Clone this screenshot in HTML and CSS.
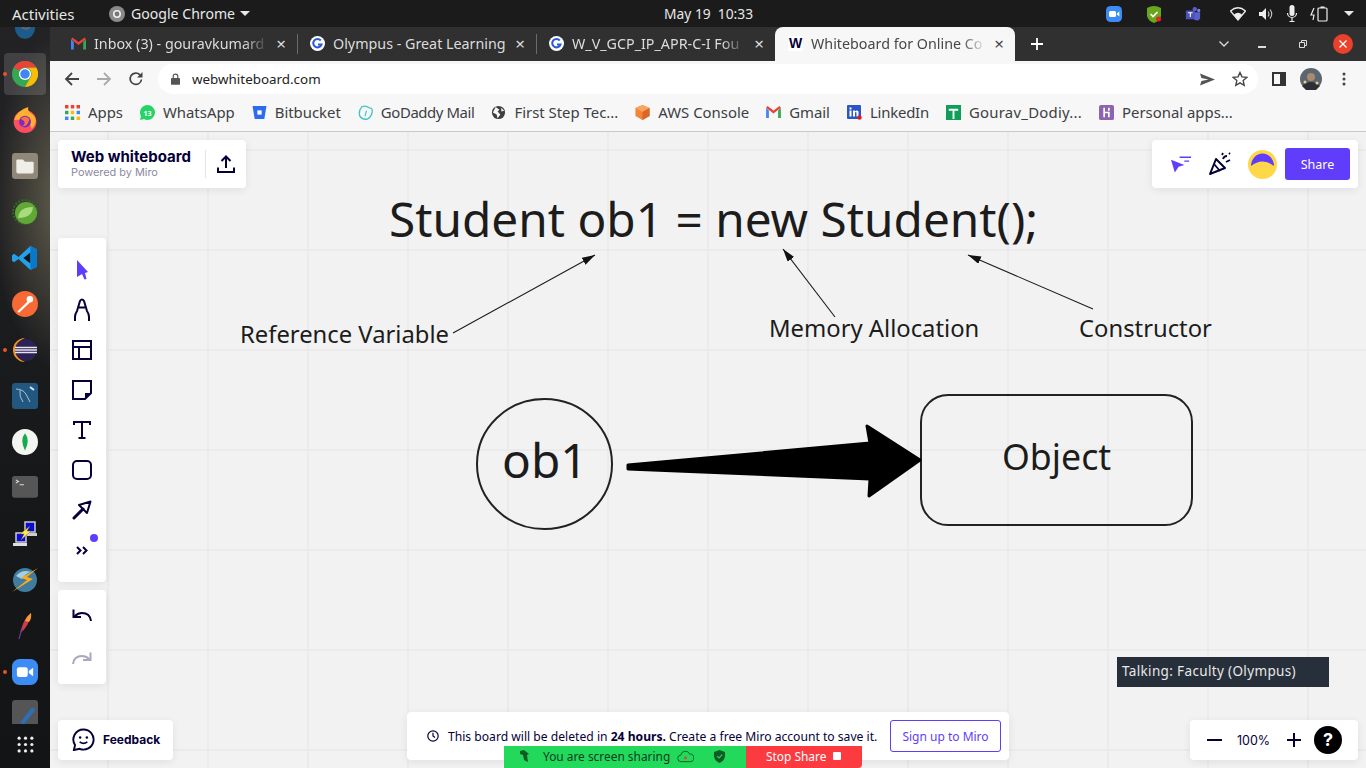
FILE: index.html
```html
<!DOCTYPE html>
<html lang="en">
<head>
    <meta charset="UTF-8">
    <title>Whiteboard for Online Collaboration</title>
    <link rel="stylesheet" href="styles.css">
</head>
<body>
<div class="topbar">
    <span class="activities">Activities</span>
    <svg class="app-icon" viewBox="0 0 16 16"><circle cx="8" cy="8" r="8" fill="#8a8a8a"/><circle cx="8" cy="8" r="4" fill="#eee"/><circle cx="8" cy="8" r="2.4" fill="#777"/></svg>
    <span class="app-name">Google Chrome</span>
    <span class="caret"></span>
    <span class="clock">May 19&nbsp;&nbsp;10:33</span>
    <div class="tray">
        <svg class="tray-icon t-zoom" viewBox="0 0 16 16"><rect width="16" height="16" rx="4.5" fill="#3d8cf5"/><rect x="3" y="5" width="7" height="6" rx="1.5" fill="#fff"/><path d="M10.8 7.4 13.3 5.5v5l-2.5-1.9z" fill="#fff"/></svg>
        <svg class="tray-icon t-green" viewBox="0 0 16 18"><path d="M1 3q7-4 14 0v8q-1 5-7 7-6-2-7-7z" fill="#6aa51e"/><path d="M4.500 9l2.500 2.500 4.500-4.500" fill="none" stroke="#fff" stroke-width="1.600"/><circle cx="12.500" cy="14" r="2.500" fill="#e3262a"/></svg>
        <svg class="tray-icon t-teams" viewBox="0 0 18 18"><circle cx="11" cy="3.500" r="2.500" fill="#5b5fc7"/><circle cx="15.500" cy="5" r="1.800" fill="#7b83eb"/><path d="M9 7h8v6a3 3 0 0 1-4 3 4 4 0 0 1-4-3z" fill="#5b5fc7"/><rect x="1" y="5" width="10" height="10" rx="1" fill="#4b53bc"/><path d="M3.500 7.500h5M6 7.500v5" stroke="#fff" stroke-width="1.200"/></svg>
        <svg class="tray-icon t-wifi" viewBox="0 0 16 14"><path d="M0.500 4Q8-2.500 15.500 4L8 13z" fill="none" stroke="#eee" stroke-width="1.300"/><path d="M4 7.500Q8 4 12 7.500L8 13z" fill="#eee"/></svg>
        <svg class="tray-icon t-vol" viewBox="0 0 16 14"><path d="M1 5h3l4-4v12l-4-4H1z" fill="#eee"/><path d="M10 4.500q2 2.500 0 5M12 2.500q3.500 4.500 0 9" fill="none" stroke="#ccc" stroke-width="1.100"/></svg>
        <svg class="tray-icon t-mic" viewBox="0 0 12 18"><rect x="3.500" y="0" width="5" height="11" rx="2.500" fill="#eee"/><path d="M1.500 8a4.500 4.500 0 0 0 9 0M6 12.500V16M3.500 16.500h5" fill="none" stroke="#eee" stroke-width="1.200"/></svg>
        <svg class="tray-icon t-batt" viewBox="0 0 20 16"><path d="M4 2 1 9h3l-1 5" fill="none" stroke="#eee" stroke-width="1.200"/><rect x="8" y="2" width="9" height="13" rx="1" fill="none" stroke="#eee" stroke-width="1.200"/><rect x="10.500" y="0.500" width="4" height="1.500" fill="#eee"/></svg>
        <span class="caret"></span>
    </div>
</div>

<div class="desktop">
    <nav class="dock">
        <div class="dock-slot dock-cut"><svg class="dock-icon" viewBox="0 0 24 28"><path d="M1 0h22v16a11 12 0 0 1-22 0z" fill="#1d5c8a"/><path d="M8 14q4 5 8 2 1-3-3-4" fill="none" stroke="#5b6670" stroke-width="2.500"/></svg></div>
        <div class="dock-slot dock-active"><i class="run-dot"></i>
            <svg class="dock-icon" viewBox="0 0 24 24"><circle cx="12" cy="12" r="12" fill="#34a853"/><path d="M22.400 6H12a6 6 0 0 1 5.200 9L12 24a12 12 0 0 0 10.400-18z" fill="#fbbc05"/><path d="M1.600 6A12 12 0 0 1 22.400 6H12a6 6 0 0 0-5.200 3z" fill="#ea4335"/><circle cx="12" cy="12" r="5.600" fill="#fff"/><circle cx="12" cy="12" r="4.400" fill="#4285f4"/></svg></div>
        <div class="dock-slot"><svg class="dock-icon" viewBox="0 0 24 24"><circle cx="12" cy="13.500" r="10.500" fill="#ff4f5e"/><path d="M2 12Q5 3 15 0q-1 4 3 6 4 3 4 7-1 5-4 7-2-10-16-8z" fill="#ffb02e"/><circle cx="12" cy="13.500" r="5.500" fill="#7a2cc4"/><path d="M8 11q4-4 8 0-1 7-7 7 5-3 1-6z" fill="#ff7139"/></svg></div>
        <div class="dock-slot"><svg class="dock-icon" viewBox="0 0 24 24"><rect width="24" height="24" rx="3" fill="#8f8778"/><path d="M4 7a1 1 0 0 1 1-1h5l2 2h7a1 1 0 0 1 1 1v8a2 2 0 0 1-2 2H6a2 2 0 0 1-2-2z" fill="#f0eee9"/></svg></div>
        <div class="dock-slot"><svg class="dock-icon" viewBox="0 0 26 26"><circle cx="13" cy="13" r="12" fill="none" stroke="#2f6b22" stroke-dasharray="2 1.500" stroke-width="2"/><circle cx="14" cy="14" r="11" fill="#62a838"/><path d="M6 19q1-11 15-11-1 11-15 11z" fill="#a6dc7c"/></svg></div>
        <div class="dock-slot"><svg class="dock-icon" viewBox="0 0 24 24"><path d="M17 1 23 4v16l-6 3L6 13l-4 3-2-1.500V9.500L2 8l4 3z" fill="#23a0ea"/><path d="M17 7 10.500 12 17 17z" fill="#15161a"/><path d="M17 1 23 4v16l-6 3z" fill="#0a78c8"/></svg></div>
        <div class="dock-slot"><svg class="dock-icon" viewBox="0 0 24 24"><circle cx="12" cy="12" r="12" fill="#f76935"/><path d="M5 19 15 9l1.500 1.500L6.500 20z" fill="#fff"/><circle cx="16.500" cy="7.500" r="3" fill="#fff"/></svg></div>
        <div class="dock-slot"><i class="run-dot"></i><svg class="dock-icon" viewBox="0 0 26 24"><path d="M13 0a12 12 0 0 0 0 24 13 13 0 0 1 0-24z" fill="#f7941e"/><circle cx="14" cy="12" r="11" fill="#2c2255"/><path d="M3 9.500h22M3 12h22M3 14.500h22" stroke="#e8e4f2" stroke-width="1.300"/></svg></div>
        <div class="dock-slot"><svg class="dock-icon" viewBox="0 0 26 26"><rect width="26" height="26" rx="3" fill="#22577f"/><path d="M4 6q8 0 11 7l3 6M8 7q-1 7 3 12" fill="none" stroke="#b9cfdd" stroke-width="0.900"/><path d="M18 4l4 3" stroke="#dce6ee" stroke-width="2"/></svg></div>
        <div class="dock-slot"><svg class="dock-icon" viewBox="0 0 24 24"><circle cx="12" cy="12" r="12" fill="#f4f4f0"/><path d="M12 4q5 6 0 16-5-10 0-16z" fill="#13aa52"/></svg></div>
        <div class="dock-slot"><svg class="dock-icon" viewBox="0 0 24 22"><rect width="24" height="20" rx="2.500" fill="#565656"/><path d="M3.500 3.500 6 5 3.500 6.500M7 8h4" fill="none" stroke="#ddd" stroke-width="1"/></svg></div>
        <div class="dock-slot"><svg class="dock-icon" viewBox="0 0 26 26"><rect x="13" y="1" width="10" height="10" fill="#0a0ad0" stroke="#ccc" stroke-width="1.500"/><rect x="4" y="12" width="10" height="9" fill="#0a0ad0" stroke="#ccc" stroke-width="1.500"/><rect x="15" y="12" width="10" height="3" fill="#ccc"/><rect x="1" y="22" width="14" height="3" fill="#ddd"/><path d="M18 5 8 13h4l-3 6 10-9h-4z" fill="#ffe94a" stroke="#555" stroke-width="0.400"/></svg></div>
        <div class="dock-slot"><svg class="dock-icon" viewBox="0 0 26 26"><circle cx="13" cy="13" r="12" fill="#3f7c9e"/><path d="M4 9q6-7 15-4-5 1-9 7z" fill="#a3cfe2"/><path d="M26 1 9 11l6 2L0 25 21 12l-6-2z" fill="#fbaa19"/></svg></div>
        <div class="dock-slot"><svg class="dock-icon" viewBox="0 0 26 26"><path d="M19 0q-7 5-10 17l-1 3q9-6 11-20z" fill="#d23a4a"/><path d="M10 15 7 26" stroke="#6c3d8f" stroke-width="1.200"/><path d="M19 0q-4 3-6 8l4 1q3-4 2-9z" fill="#f49a3a"/></svg></div>
        <div class="dock-slot"><i class="run-dot"></i><svg class="dock-icon" viewBox="0 0 24 24"><rect width="24" height="24" rx="7" fill="#3d8cf5"/><rect x="4.500" y="7.500" width="10" height="9" rx="2" fill="#fff"/><path d="M15.500 11 19.500 8v8l-4-3z" fill="#fff"/></svg></div>
        <div class="dock-slot dock-last"><svg class="dock-icon" viewBox="0 0 24 24"><rect width="24" height="24" rx="3" fill="#555"/><path d="M9 22 20 8" stroke="#2f6db5" stroke-width="4"/></svg></div>
        <svg class="dock-grid" viewBox="0 0 16 16" fill="#eee"><circle cx="2" cy="2" r="1.500"/><circle cx="8" cy="2" r="1.500"/><circle cx="14" cy="2" r="1.500"/><circle cx="2" cy="8" r="1.500"/><circle cx="8" cy="8" r="1.500"/><circle cx="14" cy="8" r="1.500"/><circle cx="2" cy="14" r="1.500"/><circle cx="8" cy="14" r="1.500"/><circle cx="14" cy="14" r="1.500"/></svg>
    </nav>

    <div class="browser">
        <div class="tabstrip">
            <div class="tab">
                <svg class="favicon" viewBox="0 0 16 13"><path d="M0 2v11h3V5z" fill="#4285f4"/><path d="M16 2v11h-3V5z" fill="#34a853"/><path d="M0 2l8 6 8-6-1.500-2L8 5 1.500 0z" fill="#ea4335"/></svg>
                <span class="tab-title tab-fade">Inbox (3) - gouravkumard</span><span class="tab-x">×</span>
            </div>
            <div class="tab tab-sep">
                <svg class="favicon" viewBox="0 0 16 16"><circle cx="8" cy="8" r="8" fill="#fff"/><path d="M11.500 4.800A4.500 4.500 0 1 0 12.300 9H8.500" fill="none" stroke="#2d5bd8" stroke-width="2.200"/></svg>
                <span class="tab-title">Olympus - Great Learning</span><span class="tab-x">×</span>
            </div>
            <div class="tab tab-sep">
                <svg class="favicon" viewBox="0 0 16 16"><circle cx="8" cy="8" r="8" fill="#fff"/><path d="M11.500 4.800A4.500 4.500 0 1 0 12.300 9H8.500" fill="none" stroke="#2d5bd8" stroke-width="2.200"/></svg>
                <span class="tab-title tab-fade">W_V_GCP_IP_APR-C-I Fou</span><span class="tab-x">×</span>
            </div>
            <div class="tab tab-active">
                <span class="favicon favicon-w">W</span>
                <span class="tab-title tab-fade">Whiteboard for Online Co</span><span class="tab-x">×</span>
            </div>
            <svg class="new-tab" viewBox="0 0 12 12"><path d="M6 0v12M0 6h12" stroke="#fff" stroke-width="1.800"/></svg>
            <div class="win-controls">
                <svg class="win-chevron" viewBox="0 0 10 6"><path d="M0.500 0.500 5 5l4.500-4.500" fill="none" stroke="#ddd" stroke-width="1.300"/></svg>
                <span class="win-min"></span>
                <svg class="win-restore" viewBox="0 0 8 8"><path d="M0.500 2.500h5v5h-5zM2.500 2.500v-2h5v5h-2" fill="none" stroke="#ddd"/></svg>
                <span class="win-close"><svg viewBox="0 0 8 8"><path d="M0.500 0.500l7 7M7.500 0.500l-7 7" stroke="#fff" stroke-width="1.300"/></svg></span>
            </div>
        </div>

        <div class="toolbar">
            <svg class="nav-icon" viewBox="0 0 16 16"><path d="M15 8H2M8 2 2 8l6 6" fill="none" stroke="#444" stroke-width="1.800"/></svg>
            <svg class="nav-icon nav-forward" viewBox="0 0 16 16"><path d="M1 8h13M8 2l6 6-6 6" fill="none" stroke="#aaa" stroke-width="1.800"/></svg>
            <svg class="nav-icon nav-reload" viewBox="0 0 16 16"><path d="M13.500 8.500A5.700 5.700 0 1 1 12 3.800" fill="none" stroke="#444" stroke-width="1.700"/><path d="M14.500 1v5.500H9z" fill="#444"/></svg>
            <div class="omnibox">
                <svg class="lock" viewBox="0 0 10 13"><path d="M2.500 6V3.500a2.500 2.500 0 0 1 5 0V6" fill="none" stroke="#555" stroke-width="1.300"/><rect y="5.500" width="10" height="7.500" rx="1" fill="#555"/></svg>
                <span class="url">webwhiteboard.com</span>
                <svg class="omni-send" viewBox="0 0 16 13"><path d="M0 0 16 6.500 0 13l1.500-5L9 6.500 1.500 5z" fill="#555"/></svg>
                <svg class="omni-star" viewBox="0 0 16 16"><path d="M8 1.500l2 4.400 4.800.5-3.600 3.200 1 4.700L8 11.900l-4.200 2.400 1-4.700L1.200 6.400 6 5.900z" fill="none" stroke="#444" stroke-width="1.400"/></svg>
            </div>
            <svg class="side-panel" viewBox="0 0 14 14"><rect x="1" y="1" width="12" height="12" fill="none" stroke="#333" stroke-width="2"/><rect x="8" y="1" width="5" height="12" fill="#333"/></svg>
            <svg class="profile" viewBox="0 0 22 22"><circle cx="11" cy="11" r="11" fill="#5b6670"/><circle cx="11" cy="9" r="4" fill="#a98a6c"/><path d="M2 18q9-8 18 0l-4 4H6z" fill="#2d2f33"/><circle cx="5" cy="14" r="1.500" fill="#e4cf7a"/><circle cx="17" cy="15" r="1.500" fill="#e4cf7a"/></svg>
            <svg class="kebab" viewBox="0 0 4 14" fill="#444"><circle cx="2" cy="2" r="1.500"/><circle cx="2" cy="7" r="1.500"/><circle cx="2" cy="12" r="1.500"/></svg>
        </div>

        <div class="bookmarks">
            <a class="bm"><svg class="bm-icon" viewBox="0 0 13 13"><g fill="#ea4335"><rect width="3" height="3"/><rect x="5" width="3" height="3"/><rect x="10" width="3" height="3"/></g><g fill="#34a853"><rect y="5" width="3" height="3"/><rect x="5" y="5" width="3" height="3" fill="#fbbc05"/><rect x="10" y="5" width="3" height="3" fill="#4285f4"/></g><g fill="#4285f4"><rect y="10" width="3" height="3"/><rect x="5" y="10" width="3" height="3" fill="#34a853"/><rect x="10" y="10" width="3" height="3" fill="#fbbc05"/></g></svg>Apps</a>
            <a class="bm"><svg class="bm-icon" viewBox="0 0 15 15"><path d="M7.500 0a7.500 7.500 0 0 1 0 15 7 7 0 0 1-3.500-1L0 15l1-3.800A7.500 7.500 0 0 1 7.500 0z" fill="#25d366"/><text x="7.500" y="10.500" class="bm-badge">13</text></svg>WhatsApp</a>
            <a class="bm"><svg class="bm-icon" viewBox="0 0 14 14"><path d="M0.500 1h13l-2 12h-9z" fill="#2d6bf0"/><rect x="5" y="5" width="4" height="4" fill="#fff"/></svg>Bitbucket</a>
            <a class="bm bm-godaddy"><svg class="bm-icon" viewBox="0 0 16 16"><path d="M4 2q4-2 8 1 4 0 3 5-1 5-5 7-5 1-8-3Q0 7 4 2z" fill="none" stroke="#45c4c4" stroke-width="1.400"/><path d="M9 6 7.500 12" stroke="#45c4c4" stroke-width="1.200"/></svg>GoDaddy Mail</a>
            <a class="bm"><svg class="bm-icon" viewBox="0 0 16 16"><circle cx="8" cy="8" r="7" fill="#3c4043"/><path d="M5 2l4 3-2 2 3 3-3 4-1-4-4-2zM11 3l3 3-3 1z" fill="#f7f7f7"/></svg>First Step Tec...</a>
            <a class="bm"><svg class="bm-icon" viewBox="0 0 16 17"><path d="M8 0l8 3.500v9L8 17 0 12.500v-9z" fill="#f58536"/><path d="M0 3.500 8 8l8-4.500L8 0z" fill="#f9a45f"/><path d="M8 8v9l8-4.500v-9z" fill="#d9672a"/></svg>AWS Console</a>
            <a class="bm"><svg class="bm-icon bm-gmail" viewBox="0 0 16 13"><path d="M0 2v11h3V5z" fill="#4285f4"/><path d="M16 2v11h-3V5z" fill="#34a853"/><path d="M0 2l8 6 8-6-1.500-2L8 5 1.500 0z" fill="#ea4335"/></svg>Gmail</a>
            <a class="bm bm-linkedin"><svg class="bm-icon" viewBox="0 0 15 15"><rect width="14" height="14" rx="1" fill="#2a56c6"/><rect x="2.500" y="5.500" width="2" height="6" fill="#fff"/><rect x="2.500" y="2.500" width="2" height="2" fill="#fff"/><path d="M6 5.500h2v1q2-2 3.500 0v5h-2v-4q-1-1-1.500 0v4H6z" fill="#fff"/><circle cx="12.500" cy="12.500" r="2.200" fill="#e8132a"/></svg>LinkedIn</a>
            <a class="bm bm-gourav"><svg class="bm-icon" viewBox="0 0 16 16"><rect width="16" height="16" fill="#0f9d58"/><path d="M3 5h10M8 5v10" stroke="#fff" stroke-width="2"/></svg>Gourav_Dodiy...</a>
            <a class="bm"><svg class="bm-icon" viewBox="0 0 16 16"><rect width="16" height="16" rx="2" fill="#8e64b0"/><path d="M5.500 3v10M5.500 8h5v5M10.500 3v3" stroke="#fff" stroke-width="1.800" fill="none"/></svg>Personal apps...</a>
        </div>

        <main class="board">
            <svg class="board-shapes" viewBox="50 132 1316 636">
                <defs>
                    <marker id="thin-head" markerWidth="14" markerHeight="10" refX="13" refY="4" orient="auto" markerUnits="userSpaceOnUse"><path d="M0 0 13 4 0 8z" fill="#111"/></marker>
                </defs>
                <g stroke="#1c1c1c" stroke-width="1.100" fill="none">
                    <path d="M453 333 595 255" marker-end="url(#thin-head)"/>
                    <path d="M835 317 783 249" marker-end="url(#thin-head)"/>
                    <path d="M1093 309 968 255" marker-end="url(#thin-head)"/>
                </g>
                <ellipse cx="544.500" cy="464" rx="67.500" ry="65" fill="none" stroke="#222" stroke-width="2"/>
                <rect x="921" y="395" width="271" height="130" rx="27" fill="none" stroke="#222" stroke-width="2"/>
                <path d="M628 465 870 443 867 426 920 460 869 496 870 479 628 469z" fill="#000" stroke="#000" stroke-width="3" stroke-linejoin="round"/>
            </svg>
            <span class="node node-code">Student ob1 = new Student();</span>
            <span class="node node-label node-ref">Reference Variable</span>
            <span class="node node-label node-mem">Memory Allocation</span>
            <span class="node node-label node-ctor">Constructor</span>
            <span class="node node-ob1">ob1</span>
            <span class="node node-obj">Object</span>

            <div class="panel brand">
                <div class="brand-text">
                    <b class="brand-name">Web whiteboard</b>
                    <span class="brand-sub">Powered by Miro</span>
                </div>
                <svg class="brand-upload" viewBox="0 0 18 18"><path d="M9 13V1.500M4.500 6 9 1.500 13.500 6M1 12.500V17h16v-4.500" fill="none" stroke="#050038" stroke-width="2"/></svg>
            </div>

            <div class="panel tools">
                <span class="tool"><svg class="ic" viewBox="0 0 20 20"><path d="M5 0 16 12l-3 1 1.500 6-2 .5L10 14l-5 3z" fill="#5f3dfb"/></svg></span>
                <span class="tool"><svg class="ic ic-big" viewBox="0 0 20 24"><path d="M3 23v-4Q3 16 5 13L8 3Q10 0 12 3l3 10q2 3 2 6v4M7 9.500h6" fill="none" stroke="#050038" stroke-width="2"/></svg></span>
                <span class="tool"><svg class="ic" viewBox="0 0 20 20"><path d="M1 1h18v18H1zM1 7h18M7 7v12" fill="none" stroke="#050038" stroke-width="2"/></svg></span>
                <span class="tool"><svg class="ic" viewBox="0 0 20 20"><path d="M1 1h18v12l-6 6H1z" fill="none" stroke="#050038" stroke-width="2"/><path d="M19 13h-6v6z" fill="#050038"/></svg></span>
                <span class="tool"><svg class="ic" viewBox="0 0 20 20"><path d="M2 5V2h16v3M10 2v16M6.500 18h7" fill="none" stroke="#050038" stroke-width="2"/></svg></span>
                <span class="tool"><svg class="ic" viewBox="0 0 20 20"><rect x="1" y="1" width="18" height="18" rx="4" fill="none" stroke="#050038" stroke-width="2"/></svg></span>
                <span class="tool"><svg class="ic" viewBox="0 0 20 20"><path d="M7 5 18.500 1.500 15 13z" fill="none" stroke="#050038" stroke-width="2" stroke-linejoin="round"/><path d="M2 18 11 9" stroke="#050038" stroke-width="3" stroke-linecap="round"/></svg></span>
                <span class="tool tool-more"><svg class="ic-more" viewBox="0 0 12 9"><path d="M1 1 4.500 4.500 1 8M7 1l3.500 3.500L7 8" fill="none" stroke="#050038" stroke-width="2"/></svg><i class="more-dot"></i></span>
            </div>

            <div class="panel history">
                <span class="tool"><svg class="ic" viewBox="0 0 20 14"><path d="M19 13q-1-8-9-8-4 0-7 3M1.500 1.500V9H9" fill="none" stroke="#050038" stroke-width="2"/></svg></span>
                <span class="tool"><svg class="ic" viewBox="0 0 20 14"><path d="M1 13q1-8 9-8 4 0 7 3M18.500 1.500V9H11" fill="none" stroke="#aaa8bb" stroke-width="2"/></svg></span>
            </div>

            <div class="panel feedback">
                <svg class="feedback-ic" viewBox="0 0 24 24"><path d="M12 1.500a10.500 10.500 0 1 1-4 20.200L2 23l1.200-5.200A10.500 10.500 0 0 1 12 1.500z" fill="none" stroke="#050038" stroke-width="2"/><circle cx="8.500" cy="10" r="1.300" fill="#050038"/><circle cx="15.500" cy="10" r="1.300" fill="#050038"/><path d="M8 14.500q4 3 8 0" fill="none" stroke="#050038" stroke-width="1.800"/></svg>
                <b>Feedback</b>
            </div>

            <div class="panel share">
                <svg class="share-cursor" viewBox="0 0 22 18"><path d="M0 4.500 14 10l-6 2-4 6z" fill="#5f3dfb"/><path d="M9 2h12M14 6h5" stroke="#5f3dfb" stroke-width="1.500"/></svg>
                <svg class="share-party" viewBox="0 0 24 24"><path d="M2 22 8 7l9 9z" fill="none" stroke="#050038" stroke-width="2" stroke-linejoin="round"/><path d="M6 12l6 7M15 7q1-3 4-3M18 10l4-2M14 3l1-2M21 1l1 1" fill="none" stroke="#050038" stroke-width="1.800"/></svg>
                <svg class="share-avatar" viewBox="0 0 29 29"><circle cx="14.500" cy="14.500" r="14.500" fill="#ffd84a"/><path d="M3 16A11.500 12.500 0 0 1 26 16Q14.500 7 3 16z" fill="#5f3dfb"/></svg>
                <button class="share-btn">Share</button>
            </div>

            <div class="talking">Talking: Faculty (Olympus)</div>

            <div class="panel zoomer">
                <span class="zoom-minus"></span>
                <span class="zoom-value">100%</span>
                <svg class="zoom-plus" viewBox="0 0 14 14"><path d="M7 0v14M0 7h14" stroke="#050038" stroke-width="2"/></svg>
                <span class="help">?</span>
            </div>

            <div class="panel notice">
                <svg class="notice-clock" viewBox="0 0 12 12"><circle cx="6" cy="6" r="5.200" fill="none" stroke="#050038" stroke-width="1.200"/><path d="M6 2.800V6l2 1.500" fill="none" stroke="#050038" stroke-width="1.200"/></svg>
                <span class="notice-text">This board will be deleted in <b>24 hours.</b> Create a free Miro account to save it.</span>
                <button class="signup">Sign up to Miro</button>
            </div>

            <div class="sharing">
                <div class="sharing-status">
                    <svg class="sh-phone" viewBox="0 0 10 12"><path d="M1 1 5 0l5 4-2 1 1 7-4-2-1-5-3-1z" fill="#0f5a25"/></svg>
                    <span>You are screen sharing</span>
                    <svg class="sh-cloud" viewBox="0 0 18 14"><path d="M4.500 13a3.500 3.500 0 0 1-.5-7 5 5 0 0 1 9.500-1A4 4 0 0 1 14 13z" fill="none" stroke="#0f5a25"/><circle cx="9" cy="9" r="1.500" fill="#d6492f"/></svg>
                    <svg class="sh-shield" viewBox="0 0 12 14"><path d="M6 0l6 2v5q-1 5-6 7-5-2-6-7V2z" fill="#0f5a25"/><path d="M3.500 6.500 5.500 8.500 9 5" fill="none" stroke="#22d95c" stroke-width="1.200"/></svg>
                </div>
                <div class="sharing-stop">Stop Share<i></i></div>
            </div>
        </main>
    </div>
</div>
</body>
</html>
```

FILE: styles.css
```css
html, body {
    height: 100vh;
    margin: 0;
    padding: 0;
    overflow: hidden;
}
* {
    box-sizing: border-box;
}
body {
    background: #1c1c1c;
    font-family: "Noto Sans", sans-serif;
    display: flex;
    flex-direction: column;
}
svg {
    display: block;
    flex-shrink: 0;
}

/* ubuntu top bar */
.topbar {
    height: 27px;
    flex-shrink: 0;
    background: #1b1b1b;
    color: #e8e8e8;
    font-size: 14px;
    display: flex;
    align-items: center;
    padding-left: 12px;
}
.activities {
    width: 97px;
    font-size: 15px;
}
.app-icon {
    width: 16px;
    height: 16px;
}
.app-name {
    margin-left: 6px;
    width: 109px;
    font-size: 14.1px;
}
.caret {
    width: 0;
    height: 0;
    border-left: 5px solid transparent;
    border-right: 5px solid transparent;
    border-top: 5px solid #e8e8e8;
}
.clock {
    margin-left: 414px;
    font-size: 13.8px;
}
.tray {
    margin-left: auto;
    width: 260px;
    padding-right: 20px;
    display: flex;
    align-items: center;
    justify-content: space-between;
}
.tray-icon {
    height: 16px;
}
.t-zoom { width: 16px; }
.t-green { width: 16px; height: 18px; margin-left: 24px; }
.t-teams { width: 18px; margin-left: 22px; }
.t-wifi { width: 16px; height: 14px; margin-left: 28px; }
.t-vol { width: 16px; height: 14px; margin-left: 12px; }
.t-mic { width: 12px; height: 18px; margin-left: 12px; }
.t-batt { width: 20px; margin-left: 12px; }
.tray .caret { margin-left: 14px; }

.desktop {
    flex: 1;
    min-height: 0;
    display: flex;
}

/* dock */
.dock {
    width: 50px;
    flex-shrink: 0;
    background:
        radial-gradient(ellipse 70px 170px at 62px 175px, rgba(120, 115, 92, 0.75), transparent),
        linear-gradient(180deg, #232326 0, #17181a 60%, #131415 100%);
    display: flex;
    flex-direction: column;
    align-items: center;
    position: relative;
    overflow: hidden;
}
.dock-slot {
    width: 42px;
    height: 46px;
    flex-shrink: 0;
    display: flex;
    align-items: center;
    justify-content: center;
    position: relative;
}
.dock-cut {
    height: 25px;
    overflow: hidden;
    align-items: flex-end;
}
.dock-cut .dock-icon {
    margin-bottom: 12px;
    height: 28px;
    width: 22px;
}
.dock-active {
    height: 42px;
    margin: 1px 0 2px;
    background: rgba(255, 255, 255, 0.14);
    border-radius: 4px;
}
.dock-last {
    height: 24px;
    overflow: hidden;
    align-items: flex-start;
    margin-top: 5px;
}
.dock-icon {
    width: 26px;
    height: 26px;
}
.run-dot {
    position: absolute;
    left: -1px;
    top: 50%;
    margin-top: -2px;
    width: 4px;
    height: 4px;
    border-radius: 50%;
    background: #e95420;
}
.dock-grid {
    width: 17px;
    height: 17px;
    margin-top: auto;
    margin-bottom: 15px;
}

/* chrome */
.browser {
    flex: 1;
    min-width: 0;
    display: flex;
    flex-direction: column;
}
.tabstrip {
    height: 34px;
    flex-shrink: 0;
    background: #303030;
    display: flex;
    align-items: center;
    padding-left: 8px;
}
.tab {
    width: 239px;
    height: 34px;
    display: flex;
    align-items: center;
    padding: 0 8px 2px 13px;
    color: #dcdcdc;
    font-size: 14.3px;
    position: relative;
}
.tab-sep::before {
    content: "";
    position: absolute;
    left: 0;
    top: 7px;
    bottom: 7px;
    width: 1px;
    background: #6b6b6b;
}
.tab-active {
    width: 240px;
    background: #f7f7f7;
    color: #45474a;
    border-radius: 8px 8px 0 0;
}
.favicon {
    width: 15px;
    height: 15px;
    margin-right: 8px;
    flex-shrink: 0;
}
.favicon-w {
    background: #fff;
    color: #050038;
    font-size: 14px;
    font-weight: 700;
    line-height: 15px;
    text-align: center;
    font-family: "Liberation Sans", sans-serif;
}
.tab-title {
    flex: 1;
    min-width: 0;
    white-space: nowrap;
}
.tab-fade {
    -webkit-mask-image: linear-gradient(to right, #000 86%, transparent 100%);
    mask-image: linear-gradient(to right, #000 86%, transparent 100%);
}
.tab-x {
    width: 16px;
    margin-left: 5px;
    font-size: 17px;
    text-align: center;
    line-height: 1;
}
.new-tab {
    width: 12px;
    height: 12px;
    margin-left: 16px;
}
.win-controls {
    margin-left: auto;
    display: flex;
    align-items: center;
}
.win-chevron {
    width: 10px;
    height: 6px;
}
.win-min {
    width: 8px;
    height: 2px;
    background: #ddd;
    margin: 6px 0 0 29px;
}
.win-restore {
    width: 8px;
    height: 8px;
    margin-left: 33px;
}
.win-close {
    width: 20px;
    height: 20px;
    border-radius: 50%;
    background: #e9412b;
    margin: 0 13px 0 26px;
    display: flex;
    align-items: center;
    justify-content: center;
}
.win-close svg {
    width: 8px;
    height: 8px;
}
.toolbar {
    height: 36px;
    flex-shrink: 0;
    background: #f7f7f7;
    display: flex;
    align-items: center;
    padding-left: 14px;
}
.nav-icon {
    width: 16px;
    height: 16px;
}
.nav-forward, .nav-reload {
    margin-left: 16px;
}
.omnibox {
    width: 1100px;
    height: 30px;
    margin-left: 14px;
    background: #fff;
    border-radius: 15px;
    display: flex;
    align-items: center;
    padding-left: 13px;
    font-size: 13.4px;
    color: #222;
}
.lock {
    width: 9px;
    height: 12px;
}
.url {
    margin-left: 12px;
}
.omni-send {
    width: 15px;
    height: 13px;
    margin-left: auto;
}
.omni-star {
    width: 16px;
    height: 16px;
    margin: 0 10px 0 17px;
}
.side-panel {
    width: 14px;
    height: 14px;
    margin-left: 14px;
}
.profile {
    width: 22px;
    height: 22px;
    margin-left: 14px;
}
.kebab {
    width: 4px;
    height: 14px;
    margin-left: 20px;
}
.bookmarks {
    height: 35px;
    flex-shrink: 0;
    background: #f7f7f7;
    border-bottom: 1px solid #c9c9c9;
    display: flex;
    align-items: center;
    gap: 17px;
    padding: 0 0 4px 15px;
    font-size: 14.9px;
    color: #3c4043;
}
.bm {
    display: flex;
    align-items: center;
    gap: 8px;
    white-space: nowrap;
}
.bm-godaddy {
    letter-spacing: -0.4px;
}
.bm-linkedin {
    letter-spacing: -0.2px;
}
.bm-gourav {
    letter-spacing: 0.25px;
}
.bm-icon {
    width: 15px;
    height: 15px;
}
.bm-gmail {
    height: 12px;
}
.bm-badge {
    font-size: 7px;
    fill: #fff;
    text-anchor: middle;
    font-weight: 700;
}

/* miro board */
.board {
    flex: 1;
    min-height: 0;
    position: relative;
    overflow: hidden;
    background-color: #f2f2f2;
    background-image:
        linear-gradient(to right, #ebebeb 2px, transparent 2px),
        linear-gradient(to bottom, #ebebeb 2px, transparent 2px);
    background-size: 100px 100px;
    background-position: 57px 17px;
    color: #1c1c1c;
}
.board-shapes {
    position: absolute;
    left: 0;
    top: 0;
    width: 1316px;
    height: 636px;
}
.node {
    position: absolute;
    white-space: nowrap;
    line-height: 1;
}
.node-code {
    left: 339px;
    top: 63px;
    font-size: 47.75px;
}
.node-label {
    font-size: 23.8px;
}
.node-ref { left: 190px; top: 191px; }
.node-mem { left: 719px; top: 185px; }
.node-ctor { left: 1029px; top: 185px; }
.node-ob1 {
    left: 452px;
    top: 304px;
    font-size: 47.75px;
}
.node-obj {
    left: 952px;
    top: 307px;
    font-size: 35.7px;
}

.panel {
    position: absolute;
    background: #fff;
    border-radius: 4px;
    color: #050038;
    box-shadow: 0 2px 8px rgba(5, 0, 56, 0.08);
    font-family: Inter, sans-serif;
}
.brand {
    left: 8px;
    top: 8px;
    width: 188px;
    height: 48px;
    display: flex;
    align-items: center;
    padding-left: 13px;
}
.brand-text {
    width: 135px;
    height: 28px;
    border-right: 1px solid #e4e4e8;
    display: flex;
    flex-direction: column;
    justify-content: center;
}
.brand-name {
    font-size: 15px;
    line-height: 15px;
}
.brand-sub {
    font-size: 10.9px;
    line-height: 16px;
    color: #8b899f;
}
.brand-upload {
    width: 18px;
    height: 18px;
    margin-left: 11px;
}
.tools {
    left: 8px;
    top: 106px;
    width: 48px;
    height: 344px;
    padding-top: 12px;
    display: flex;
    flex-direction: column;
}
.tool {
    height: 40px;
    flex-shrink: 0;
    display: flex;
    align-items: center;
    justify-content: center;
    position: relative;
}
.ic {
    width: 20px;
    height: 20px;
}
.ic-big {
    height: 24px;
}
.history .ic {
    height: 14px;
}
.ic-more {
    width: 12px;
    height: 9px;
}
.more-dot {
    position: absolute;
    left: 32px;
    top: 4px;
    width: 8px;
    height: 8px;
    border-radius: 50%;
    background: #5f3dfb;
}
.history {
    left: 8px;
    top: 458px;
    width: 48px;
    height: 94px;
    padding-top: 5px;
    display: flex;
    flex-direction: column;
    gap: 3px;
}
.feedback {
    left: 8px;
    top: 588px;
    width: 115px;
    height: 40px;
    display: flex;
    align-items: center;
    padding: 0 0 1px 14px;
    font-size: 12px;
}
.feedback-ic {
    width: 23px;
    height: 23px;
    margin-right: 8px;
}
.share {
    left: 1102px;
    top: 8px;
    width: 206px;
    height: 48px;
    display: flex;
    align-items: center;
    padding-left: 19px;
}
.share-cursor {
    width: 21px;
    height: 18px;
}
.share-party {
    width: 24px;
    height: 24px;
    margin-left: 16px;
}
.share-avatar {
    width: 29px;
    height: 29px;
    margin-left: 16px;
}
.share-btn {
    width: 65px;
    height: 32px;
    margin-left: 8px;
    border: 0;
    border-radius: 3px;
    background: #5f3dfb;
    color: #fff;
    font: 12.5px "Noto Sans", sans-serif;
}
.talking {
    position: absolute;
    left: 1067px;
    top: 525px;
    width: 212px;
    height: 30px;
    background: #262f3a;
    color: #e8e8e8;
    font-size: 13.5px;
    letter-spacing: 0.35px;
    line-height: 29px;
    padding-left: 5px;
}
.zoomer {
    left: 1140px;
    top: 588px;
    width: 168px;
    height: 40px;
    display: flex;
    align-items: center;
    padding-left: 17px;
}
.zoom-minus {
    width: 15px;
    height: 2px;
    background: #050038;
}
.zoom-value {
    margin-left: 15px;
    font-size: 12.5px;
    width: 49px;
}
.zoom-plus {
    width: 14px;
    height: 14px;
    margin-left: 1px;
}
.help {
    width: 28px;
    height: 28px;
    margin-left: 13px;
    border-radius: 50%;
    background: #000;
    color: #fff;
    font-size: 18px;
    font-weight: 700;
    line-height: 28px;
    text-align: center;
}
.notice {
    left: 357px;
    top: 580px;
    width: 602px;
    height: 48px;
    display: flex;
    align-items: center;
    padding: 0 8px 0 20px;
    font-family: "Noto Sans", sans-serif;
    font-size: 12.14px;
}
.notice-clock {
    width: 12px;
    height: 12px;
    margin-right: 9px;
}
.notice-text {
    white-space: nowrap;
}
.signup {
    margin-left: auto;
    width: 111px;
    height: 32px;
    background: #fff;
    border: 1px solid #5f3dfb;
    border-radius: 3px;
    color: #5f3dfb;
    font: 12px "Noto Sans", sans-serif;
}
.sharing {
    position: absolute;
    left: 454px;
    top: 614px;
    height: 22px;
    display: flex;
    font-size: 11.9px;
}
.sharing-status {
    width: 242px;
    background: #22d95c;
    color: #0f3d1e;
    display: flex;
    align-items: center;
    padding: 0 0 2px 15px;
}
.sh-phone {
    width: 10px;
    height: 12px;
    margin-right: 14px;
}
.sh-cloud {
    width: 17px;
    height: 14px;
    margin-left: 7px;
}
.sh-shield {
    width: 11px;
    height: 13px;
    margin-left: 20px;
}
.sharing-stop {
    width: 116px;
    background: #fb3b3f;
    color: #fff;
    border-radius: 0 0 4px 0;
    display: flex;
    align-items: center;
    padding: 0 0 2px 20px;
}
.sharing-stop i {
    width: 8px;
    height: 8px;
    margin-left: 7px;
    background: #fff;
    border-radius: 1px;
}
```
